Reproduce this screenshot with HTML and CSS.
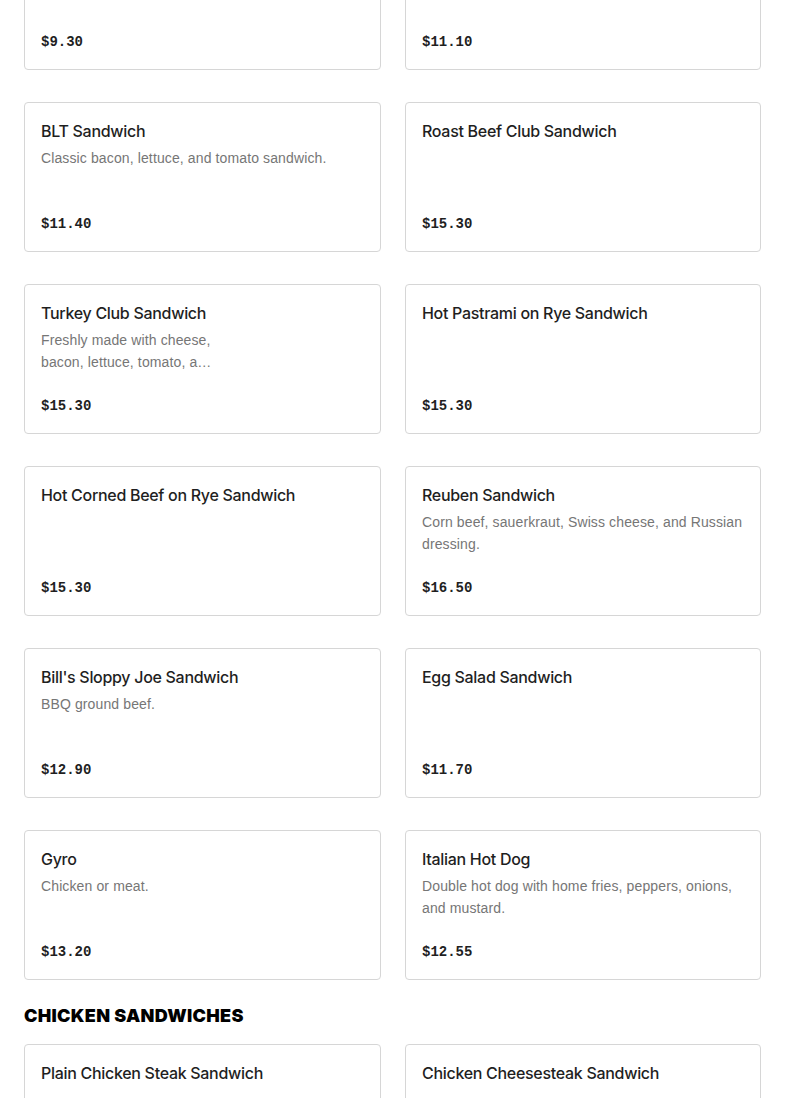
FILE: index.html
```html
<!DOCTYPE html>
<html lang="en">
<head>
<meta charset="utf-8">
<title>Menu</title>
<link rel="stylesheet" href="styles.css">
</head>
<body>
<main class="menu">
  <section class="section section-first">
    <div class="grid">
      <article class="card"><h3 class="title">Cheesesteak Sandwich</h3><p class="desc"></p><div class="price">$9.30</div></article>
      <article class="card"><h3 class="title">Ham and Cheese Sandwich</h3><p class="desc"></p><div class="price">$11.10</div></article>
      <article class="card"><h3 class="title">BLT Sandwich</h3><p class="desc">Classic bacon, lettuce, and tomato sandwich.</p><div class="price">$11.40</div></article>
      <article class="card"><h3 class="title">Roast Beef Club Sandwich</h3><div class="price">$15.30</div></article>
      <article class="card"><h3 class="title">Turkey Club Sandwich</h3><p class="desc desc-narrow">Freshly made with cheese, bacon, lettuce, tomato, and mayo on toasted bread.</p><div class="price">$15.30</div></article>
      <article class="card"><h3 class="title">Hot Pastrami on Rye Sandwich</h3><div class="price">$15.30</div></article>
      <article class="card"><h3 class="title">Hot Corned Beef on Rye Sandwich</h3><div class="price">$15.30</div></article>
      <article class="card"><h3 class="title">Reuben Sandwich</h3><p class="desc">Corn beef, sauerkraut, Swiss cheese, and Russian dressing.</p><div class="price">$16.50</div></article>
      <article class="card"><h3 class="title">Bill's Sloppy Joe Sandwich</h3><p class="desc">BBQ ground beef.</p><div class="price">$12.90</div></article>
      <article class="card"><h3 class="title">Egg Salad Sandwich</h3><div class="price">$11.70</div></article>
      <article class="card"><h3 class="title">Gyro</h3><p class="desc">Chicken or meat.</p><div class="price">$13.20</div></article>
      <article class="card"><h3 class="title">Italian Hot Dog</h3><p class="desc">Double hot dog with home fries, peppers, onions, and mustard.</p><div class="price">$12.55</div></article>
    </div>
  </section>
  <section class="section">
    <h2 class="section-title">CHICKEN SANDWICHES</h2>
    <div class="grid">
      <article class="card"><h3 class="title">Plain Chicken Steak Sandwich</h3><div class="price">$10.50</div></article>
      <article class="card"><h3 class="title">Chicken Cheesesteak Sandwich</h3><div class="price">$11.50</div></article>
    </div>
  </section>
</main>
</body>
</html>
```
FILE: styles.css
```css
* { box-sizing: border-box; }
html, body { margin: 0; padding: 0; background: #ffffff; }
body {
  font-family: "Inter", "Liberation Sans", sans-serif;
  color: #1f1f1f;
}
.menu { padding: 0 24px; overflow: hidden; }
.section-first { margin-top: -80px; }
.grid {
  display: grid;
  grid-template-columns: 357px 356px;
  column-gap: 24px;
  row-gap: 32px;
}
.card {
  display: flex;
  flex-direction: column;
  height: 150px;
  padding: 16px;
  border: 1px solid #d6d6d6;
  border-radius: 4px;
  background: #fff;
}
.title {
  margin: 0;
  font-size: 16px;
  line-height: 24px;
  font-weight: 500;
  letter-spacing: -0.3px;
  color: #1f1f1f;
}
.desc {
  margin: 4px 0 0;
  font-family: "Liberation Sans", "Inter", sans-serif;
  font-size: 14px;
  line-height: 22px;
  letter-spacing: 0.12px;
  color: #767676;
  display: -webkit-box;
  -webkit-box-orient: vertical;
  -webkit-line-clamp: 2;
  overflow: hidden;
}
.desc-narrow { width: 174px; }
.price {
  margin-top: auto;
  font-family: "Liberation Mono", "DejaVu Sans Mono", monospace;
  font-size: 14px;
  line-height: 22px;
  font-weight: 700;
  color: #1f1f1f;
}
.section-title {
  margin: 24px 0 16px;
  font-size: 18px;
  line-height: 24px;
  font-weight: 900;
  letter-spacing: 0.3px;
  color: #000;
}
```
